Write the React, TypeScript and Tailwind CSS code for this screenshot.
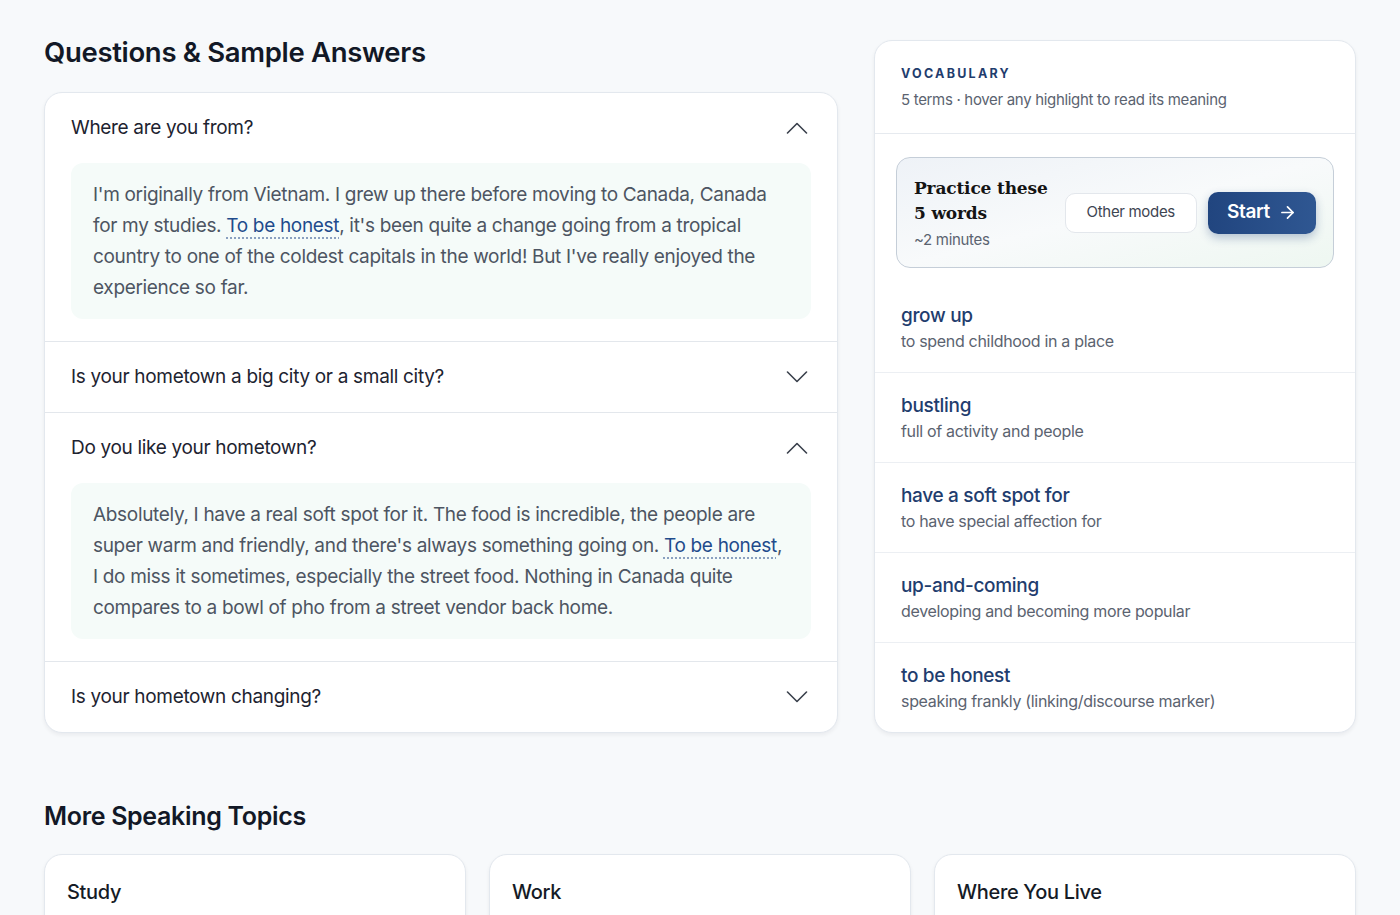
import { ArrowRight } from "lucide-react";

type QA = { q: string; open: boolean; answer?: React.ReactNode };

const Honest = () => (
  <span className="text-[#1f4b8c] underline decoration-dotted decoration-[#8aa0c0] decoration-2 underline-offset-[5px] cursor-help">
    To be honest
  </span>
);

// thin wide chevron used by the accordion headers
const Chevron = ({ up }: { up: boolean }) => (
  <svg width="22" height="12" viewBox="0 0 22 12" fill="none" className="text-[#3a404c] shrink-0">
    <path
      d={up ? "M1.5 11 L11 1.5 L20.5 11" : "M1.5 1 L11 10.5 L20.5 1"}
      stroke="currentColor"
      strokeWidth="1.6"
      strokeLinecap="round"
      strokeLinejoin="round"
    />
  </svg>
);

const questions: QA[] = [
  {
    q: "Where are you from?",
    open: true,
    answer: (
      <>
        I'm originally from Vietnam. I grew up there before moving to Canada, Canada for my studies. <Honest />, it's
        been quite a change going from a tropical country to one of the coldest capitals in the world! But I've really
        enjoyed the experience so far.
      </>
    ),
  },
  { q: "Is your hometown a big city or a small city?", open: false },
  {
    q: "Do you like your hometown?",
    open: true,
    answer: (
      <>
        Absolutely, I have a real soft spot for it. The food is incredible, the people are super warm and friendly, and
        there's always something going on. <Honest />, I do miss it sometimes, especially the street food. Nothing in
        Canada quite compares to a bowl of pho from a street vendor back home.
      </>
    ),
  },
  { q: "Is your hometown changing?", open: false },
];

const vocab = [
  { term: "grow up", def: "to spend childhood in a place" },
  { term: "bustling", def: "full of activity and people" },
  { term: "have a soft spot for", def: "to have special affection for" },
  { term: "up-and-coming", def: "developing and becoming more popular" },
  { term: "to be honest", def: "speaking frankly (linking/discourse marker)" },
];

const topics = ["Study", "Work", "Where You Live"];

export default function App() {
  return (
    <div className="min-h-screen bg-[#f7f9fb] font-['Inter',sans-serif] text-[#151b26] tracking-[-0.02em]">
      <div className="px-11 pt-[30px] pb-16">
        <div className="grid grid-cols-[794px_1fr] gap-9 items-start">
          {/* Questions column */}
          <div>
            <h1 className="text-[27.5px] leading-[44px] font-semibold text-[#121826] mb-[18px]">
              Questions &amp; Sample Answers
            </h1>
            <div className="bg-white rounded-[18px] border border-[#e3e8ee] shadow-[0_2px_4px_rgba(15,23,42,0.06)] overflow-hidden">
              {questions.map((item, i) => (
                <div key={item.q} className={i > 0 ? "border-t border-[#e3e7ec]" : ""}>
                  <button className="w-full flex items-center justify-between pl-[26px] pr-[29px] py-[21px] text-left">
                    <span className="text-[19px] leading-[28px] text-[#1d2330]">{item.q}</span>
                    <Chevron up={item.open} />
                  </button>
                  {item.open && item.answer && (
                    <div className="px-[26px] pb-[22px]">
                      <p className="bg-[#f5fbf9] rounded-[12px] px-[22px] py-[16px] text-[19px] leading-[31px] text-[#4d5562]">
                        {item.answer}
                      </p>
                    </div>
                  )}
                </div>
              ))}
            </div>
          </div>

          {/* Vocabulary panel */}
          <aside className="mt-[10px] bg-white rounded-[18px] border border-[#e3e8ee] shadow-[0_2px_4px_rgba(15,23,42,0.06)] overflow-hidden">
            <div className="px-[26px] pt-[24px] pb-[22px] border-b border-[#e6eaef]">
              <div className="text-[12.5px] leading-[18px] font-bold tracking-[0.18em] text-[#1f3d6e]">VOCABULARY</div>
              <div className="mt-[6px] text-[15px] leading-[22px] text-[#5b6370]">
                5 terms · hover any highlight to read its meaning
              </div>
            </div>
            <div className="px-[21px] pt-[23px] pb-[15px]">
              <div className="rounded-[14px] border border-[#c5ced8] bg-gradient-to-br from-[#eef2f7] via-[#f8fafb] to-[#eef7f1] pl-[17px] pr-[17px] py-[17.5px] flex items-center">
                <div className="flex-1">
                  <div className="font-['DejaVu_Serif',serif] font-bold text-[17px] leading-[25px] text-[#141414] tracking-[-0.01em]">
                    Practice these
                    <br />5 words
                  </div>
                  <div className="mt-[4px] text-[15px] leading-[20px] text-[#5b6370]">~2 minutes</div>
                </div>
                <button className="h-[40px] px-[21px] rounded-[10px] border border-[#e3e7ec] bg-white text-[15px] text-[#3e4552]">
                  Other modes
                </button>
                <button className="ml-[11px] h-[42px] px-[19px] rounded-[10px] bg-gradient-to-r from-[#21457f] to-[#2f5792] text-white text-[19px] font-semibold flex items-center gap-[8px] shadow-[0_4px_10px_rgba(33,69,127,0.3)]">
                  Start
                  <ArrowRight className="w-[19px] h-[19px]" strokeWidth={2.2} />
                </button>
              </div>
            </div>
            <ul>
              {vocab.map((v, i) => (
                <li key={v.term} className={`px-[26px] py-[19.5px] ${i > 0 ? "border-t border-[#eceff3]" : ""}`}>
                  <div className="text-[19px] leading-[26px] font-medium text-[#1f3d6e]">{v.term}</div>
                  <div className="text-[16px] leading-[24px] text-[#5b6370]">{v.def}</div>
                </li>
              ))}
            </ul>
          </aside>
        </div>

        {/* More topics */}
        <h2 className="mt-[65px] text-[25px] leading-[36px] font-semibold text-[#121826]">More Speaking Topics</h2>
        <div className="mt-[20px] grid grid-cols-3 gap-[23px]">
          {topics.map((t) => (
            <div
              key={t}
              className="bg-white rounded-[18px] border border-[#e3e8ee] shadow-[0_2px_4px_rgba(15,23,42,0.06)] px-[22px] pt-[23px] pb-[40px]"
            >
              <div className="text-[20px] leading-[28px] font-medium text-[#151b26]">{t}</div>
            </div>
          ))}
        </div>
      </div>
    </div>
  );
}
